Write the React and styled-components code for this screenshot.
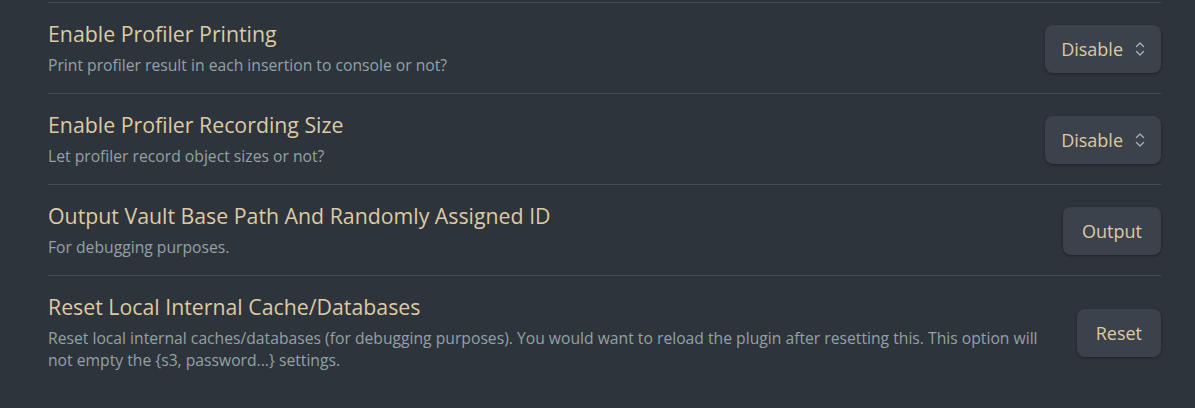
import React from "react";
import styled, { createGlobalStyle } from "styled-components";

const GlobalStyle = createGlobalStyle`
  html, body {
    margin: 0;
    padding: 0;
    background: #2e343c;
  }
  body {
    font-family: "Open Sans", "Noto Sans", sans-serif;
  }
`;

const Page = styled.div`
  width: 1195px;
  height: 408px;
  overflow: hidden;
  box-sizing: border-box;
  padding: 2px 34px 0 48px;
  background: #2e343c;
`;

const Item = styled.div`
  display: flex;
  align-items: center;
  gap: 32px;
  padding: 18px 0 17px;
  border-top: 1px solid #454c56;
`;

const Info = styled.div`
  flex: 1;
  min-width: 0;
`;

const Name = styled.div`
  color: #ddcaa3;
  font-size: 21.3px;
  line-height: 26px;
`;

const Description = styled.div`
  margin-top: 7px;
  color: #94a1a4;
  font-size: 15.7px;
  line-height: 22px;
`;

const Control = styled.div`
  flex: none;
  display: flex;
  justify-content: flex-end;
`;

const Button = styled.button`
  height: 48px;
  padding: 0 ${(p) => p.$pad || 19}px;
  border: none;
  border-radius: 8px;
  background: #3b424b;
  color: #ddcaa3;
  font-family: inherit;
  font-size: 18px;
  box-shadow: 0 1px 3px rgba(0, 0, 0, 0.35);
  cursor: pointer;
`;

const Select = styled(Button)`
  display: flex;
  align-items: center;
  gap: 12px;
  padding: 0 16px;
`;

const Chevrons = () => (
  <svg width="10" height="16" viewBox="0 0 10 16" fill="none">
    <path d="M1.5 5.5 L5 2 L8.5 5.5" stroke="#a7adb4" strokeWidth="1.4" strokeLinecap="round" strokeLinejoin="round" />
    <path d="M1.5 10.5 L5 14 L8.5 10.5" stroke="#a7adb4" strokeWidth="1.4" strokeLinecap="round" strokeLinejoin="round" />
  </svg>
);

const settings = [
  {
    name: "Enable Profiler Printing",
    desc: "Print profiler result in each insertion to console or not?",
    type: "select",
    label: "Disable",
  },
  {
    name: "Enable Profiler Recording Size",
    desc: "Let profiler record object sizes or not?",
    type: "select",
    label: "Disable",
  },
  {
    name: "Output Vault Base Path And Randomly Assigned ID",
    desc: "For debugging purposes.",
    type: "button",
    label: "Output",
  },
  {
    name: "Reset Local Internal Cache/Databases",
    desc: "Reset local internal caches/databases (for debugging purposes). You would want to reload the plugin after resetting this. This option will not empty the {s3, password...} settings.",
    type: "button",
    label: "Reset",
  },
];

export default function App() {
  return (
    <>
      <GlobalStyle />
      <Page>
        {settings.map((s) => (
          <Item key={s.name}>
            <Info>
              <Name>{s.name}</Name>
              <Description>{s.desc}</Description>
            </Info>
            <Control>
              {s.type === "select" ? (
                <Select>
                  {s.label}
                  <Chevrons />
                </Select>
              ) : (
                <Button>{s.label}</Button>
              )}
            </Control>
          </Item>
        ))}
      </Page>
    </>
  );
}
